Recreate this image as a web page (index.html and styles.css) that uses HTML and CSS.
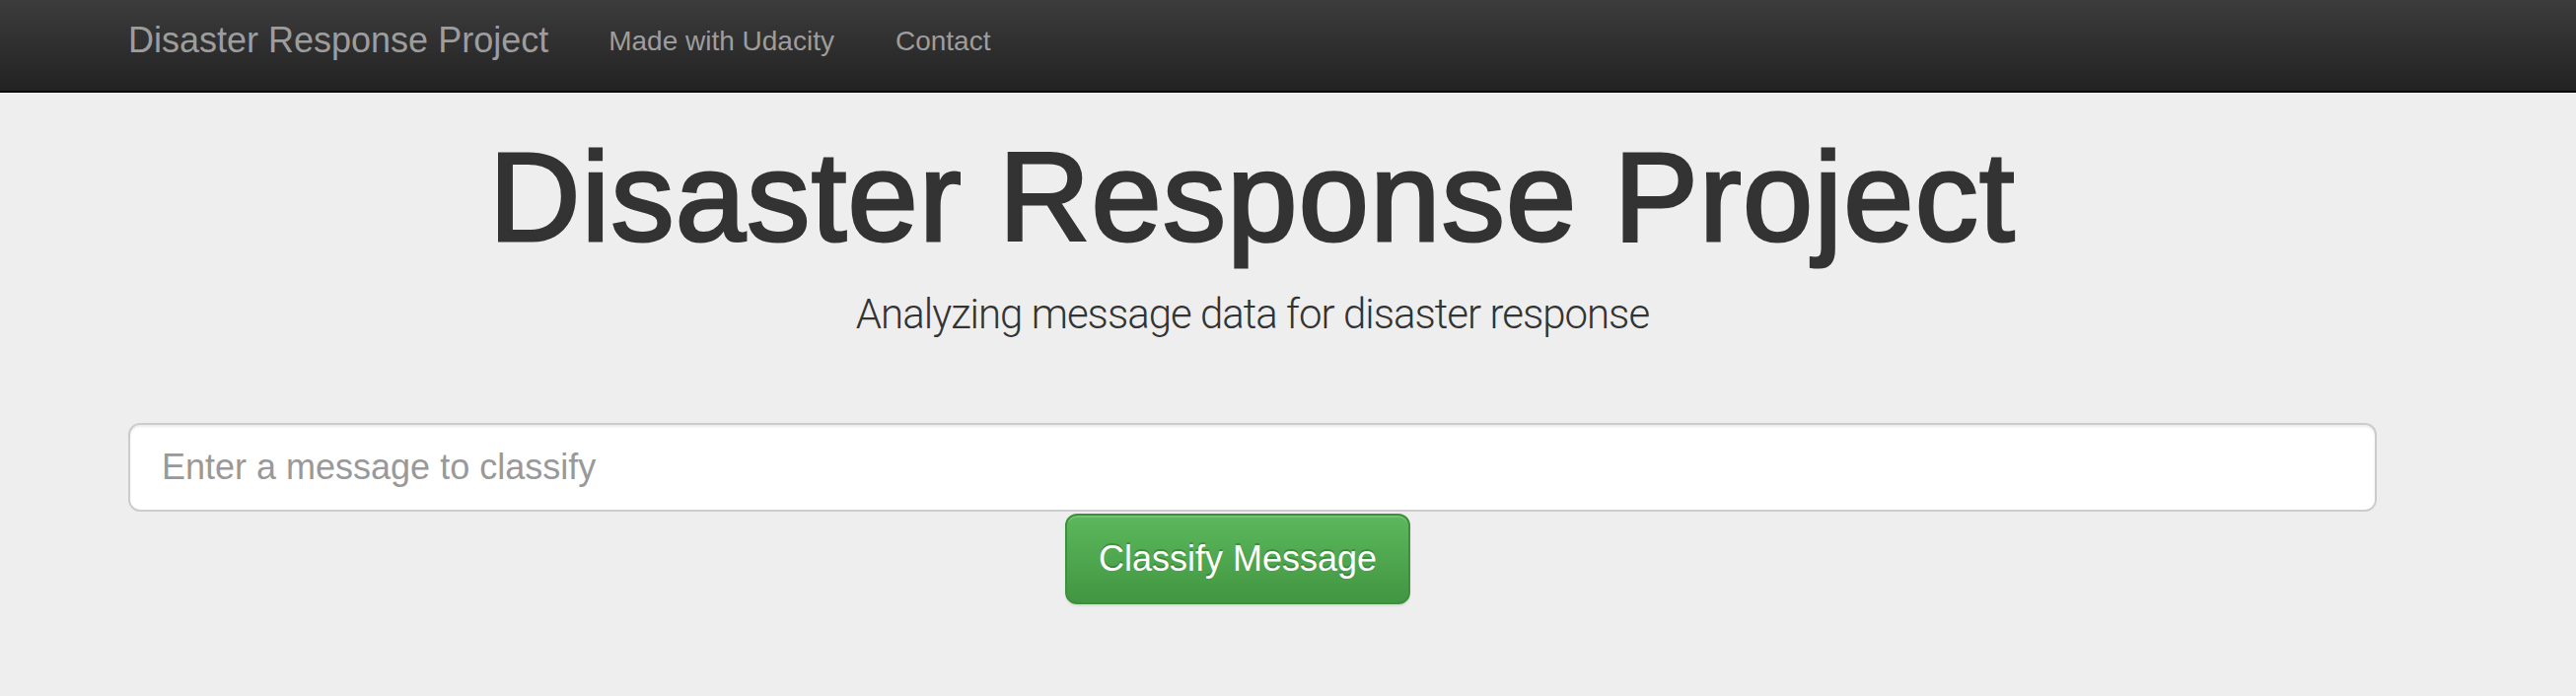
FILE: index.html
```html
<!DOCTYPE html>
<html lang="en">
<head>
<meta charset="utf-8">
<title>Disaster Response Project</title>
<link rel="stylesheet" href="styles.css">
</head>
<body>
<nav class="navbar">
  <div class="nav-inner">
    <a class="brand" href="#">Disaster Response Project</a>
    <ul class="nav-links">
      <li><a class="nav-link" href="#">Made with Udacity</a></li>
      <li><a class="nav-link" href="#">Contact</a></li>
    </ul>
  </div>
</nav>
<main class="jumbotron">
  <div class="container">
    <h1 class="title">Disaster Response Project</h1>
    <p class="lead">Analyzing message data for disaster response</p>
    <form class="classify-form">
      <input class="message-input" type="text" placeholder="Enter a message to classify">
      <div class="btn-row">
        <button class="btn-classify" type="button">Classify Message</button>
      </div>
    </form>
  </div>
</main>
</body>
</html>
```
FILE: styles.css
```css
html, body {
  margin: 0;
  padding: 0;
}
body {
  background: #eeeeee;
  font-family: "Liberation Sans", Arial, Helvetica, sans-serif;
  color: #333333;
  width: 2612px;
  height: 706px;
  overflow: hidden;
}
.navbar {
  height: 92px;
  background: linear-gradient(to bottom, #3c3c3c 0%, #222222 100%);
  border-bottom: 2px solid #080808;
}
.nav-inner {
  display: flex;
  align-items: flex-start;
  padding-left: 130px;
}
.brand {
  display: block;
  font-size: 36px;
  line-height: 40px;
  padding-top: 21px;
  padding-right: 30px;
  color: #9d9d9d;
  text-decoration: none;
}
.nav-links {
  display: flex;
  list-style: none;
  margin: 0;
  padding: 0;
}
.nav-link {
  display: block;
  font-size: 28px;
  line-height: 40px;
  padding: 22px 31px 0;
  color: #9d9d9d;
  text-decoration: none;
}
.container {
  padding-left: 130px;
  width: 2280px;
}
.title {
  margin: 42px 0 0;
  font-size: 128px;
  line-height: 128px;
  font-weight: 400;
  text-align: center;
  color: #333333;
  -webkit-text-stroke: 3px #333333;
  letter-spacing: 1.3px;
}
.lead {
  margin: 34px 0 0;
  font-family: Roboto, "Liberation Sans", sans-serif;
  font-weight: 300;
  font-size: 42px;
  line-height: 42px;
  letter-spacing: -1px;
  text-align: center;
  color: #333333;
}
.classify-form {
  margin-top: 89px;
}
.message-input {
  display: block;
  box-sizing: border-box;
  width: 2280px;
  height: 90px;
  margin: 0 0 2px;
  padding: 0 32px;
  font-family: "Liberation Sans", Arial, sans-serif;
  font-size: 36px;
  color: #555555;
  background: #ffffff;
  border: 2px solid #cccccc;
  border-radius: 12px;
  box-shadow: inset 0 2px 2px rgba(0, 0, 0, 0.075);
  outline: none;
}
.message-input::placeholder {
  color: #999999;
}
.btn-row {
  padding-left: 950px;
}
.btn-classify {
  display: block;
  box-sizing: border-box;
  height: 92px;
  padding: 0 32px;
  font-family: "Liberation Sans", Arial, sans-serif;
  font-size: 36px;
  line-height: 48px;
  color: #ffffff;
  background: linear-gradient(to bottom, #5cb85c 0%, #419641 100%);
  border: 2px solid #3e8f3e;
  border-radius: 12px;
  text-shadow: 0 -2px 0 rgba(0, 0, 0, 0.2);
  box-shadow: inset 0 2px 0 rgba(255, 255, 255, 0.15), 0 2px 2px rgba(0, 0, 0, 0.075);
  cursor: pointer;
}
```
